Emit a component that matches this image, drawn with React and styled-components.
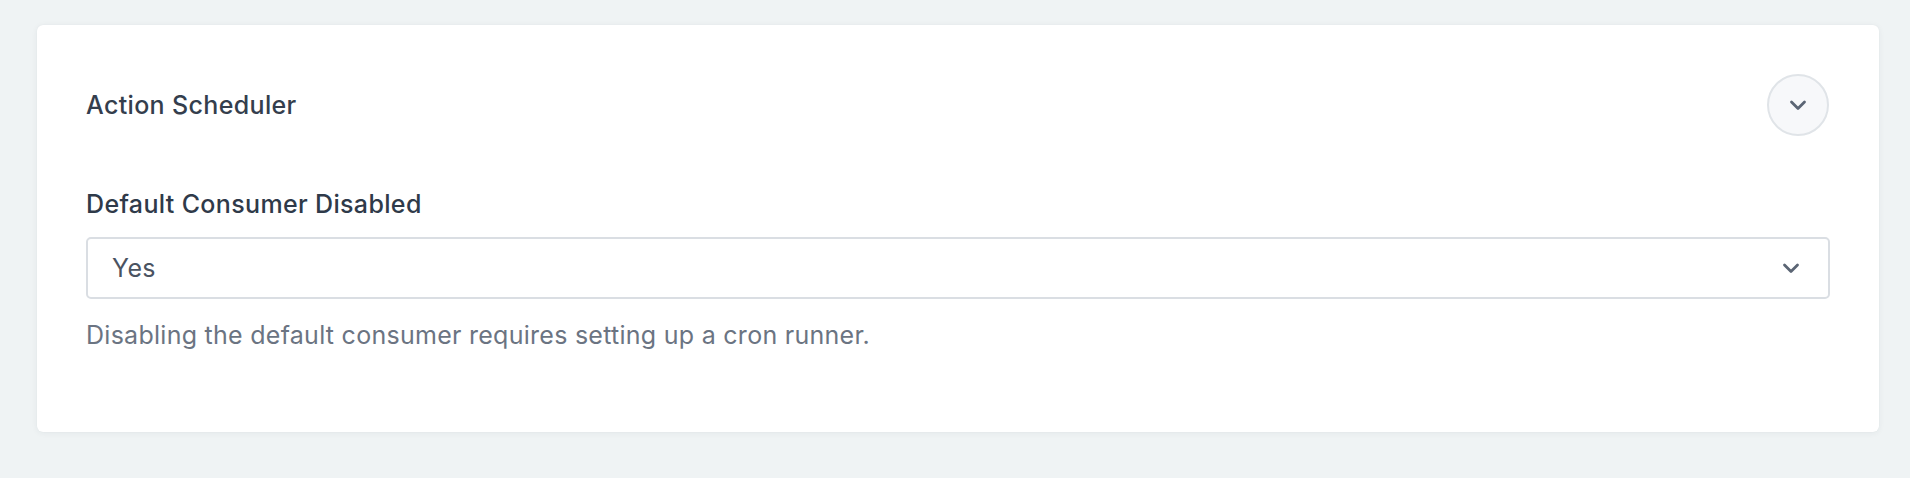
import React from "react";
import styled, { createGlobalStyle } from "styled-components";

const GlobalStyle = createGlobalStyle`
  html, body {
    margin: 0;
    padding: 0;
    background: #eff3f4;
  }
  body {
    font-family: Inter, "Noto Sans", "Liberation Sans", sans-serif;
    -webkit-font-smoothing: antialiased;
  }
`;

const ChevronDown = () => (
  <svg width="20" height="20" viewBox="0 0 20 20" fill="none">
    <path
      d="M3.5 7l6.5 6.5L16.5 7"
      stroke="#5b6574"
      strokeWidth="2.8"
      strokeLinecap="round"
      strokeLinejoin="round"
    />
  </svg>
);

const App = () => {
  return (
    <>
      <GlobalStyle />
      <Page>
        <Card>
          <Header>
            <Title>Action Scheduler</Title>
            <ToggleButton type="button" aria-label="Collapse">
              <ChevronDown />
            </ToggleButton>
          </Header>
          <Field>
            <Label>Default Consumer Disabled</Label>
            <SelectBox>
              <span>Yes</span>
              <ChevronDown />
            </SelectBox>
            <Help>Disabling the default consumer requires setting up a cron runner.</Help>
          </Field>
        </Card>
      </Page>
    </>
  );
};

export default App;

const Page = styled.div`
  padding: 25px 31px 46px 37px;
`;

const Card = styled.div`
  background: #fff;
  border-radius: 6px;
  box-shadow: 0 1px 6px rgba(30, 50, 70, 0.06), 0 0 1px rgba(30, 50, 70, 0.08);
  padding: 49px 49px 79px;
`;

const Header = styled.div`
  display: flex;
  align-items: center;
  justify-content: space-between;
  height: 62px;
`;

const Title = styled.h2`
  margin: 0;
  font-size: 25px;
  line-height: 36px;
  letter-spacing: 0.35px;
  font-weight: 500;
  color: #343e4d;
`;

const ToggleButton = styled.button`
  width: 62px;
  height: 62px;
  margin-right: 1px;
  border-radius: 50%;
  border: 2px solid #e0e4e8;
  background: #f7f8fa;
  display: flex;
  align-items: center;
  justify-content: center;
  padding: 0;
  cursor: pointer;
`;

const Field = styled.div`
  margin-top: 50px;
`;

const Label = styled.div`
  font-size: 25px;
  line-height: 36px;
  letter-spacing: 0.35px;
  font-weight: 500;
  color: #2f3a49;
  margin-bottom: 15px;
`;

const SelectBox = styled.div`
  height: 62px;
  box-sizing: border-box;
  border: 2px solid #dadee3;
  border-radius: 5px;
  display: flex;
  align-items: center;
  justify-content: space-between;
  padding: 0 27px 0 24px;
  font-size: 25px;
  letter-spacing: 0.35px;
  color: #4a5361;
`;

const Help = styled.p`
  margin: 18px 0 0;
  font-size: 25px;
  line-height: 36px;
  letter-spacing: 0.27px;
  color: #6b7482;
`;
